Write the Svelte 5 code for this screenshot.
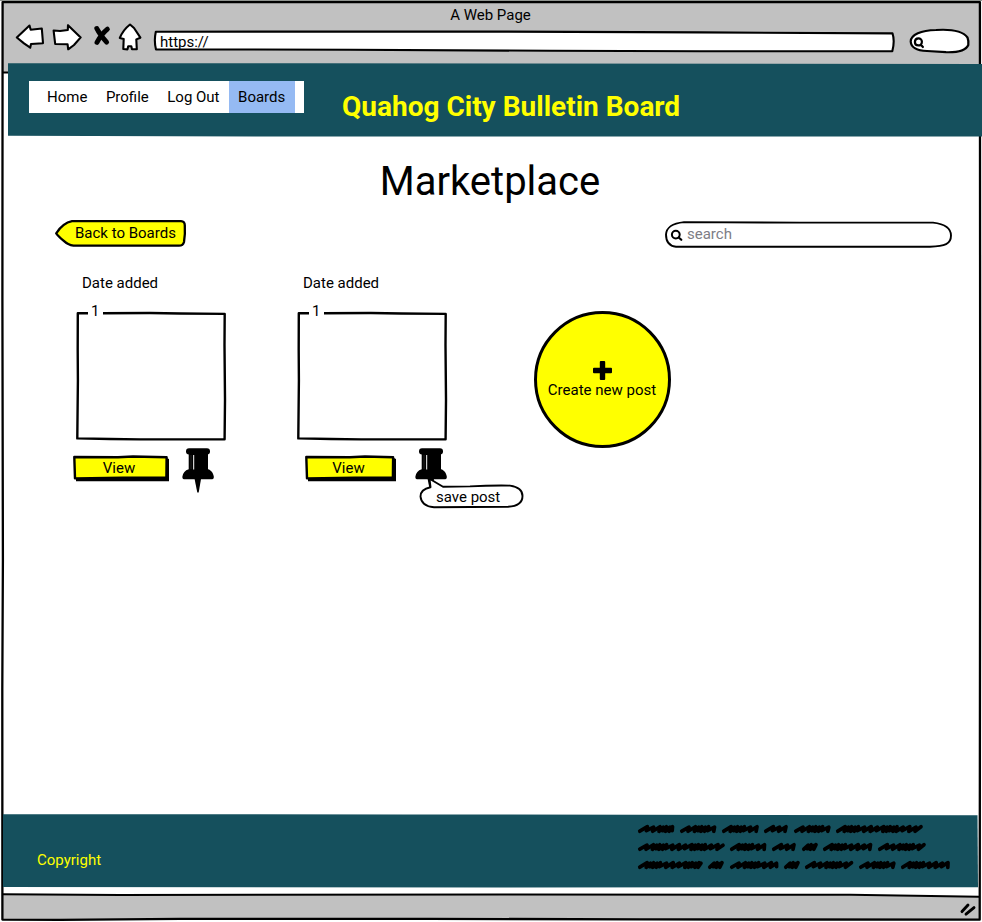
<script>
  const nav = ['Home', 'Profile', 'Log Out', 'Boards'];
  const active = 'Boards';

  const blurb = [
    [36.5, 36.5, 37, 24, 37, 87],
    [87, 36.5, 24, 16, 49.5, 48],
    [65, 16, 48.5, 16, 48.5, 37, 49]
  ];

  // Zigzag handwriting: long upstrokes with short returns
  function scribble(width, seed) {
    const steps = [7.6, 7.2, 7.4, 4.4, 4, 4.6, 4.2, 7.2];
    let x = 1.8;
    let i = width < 20 ? 3 : seed % 3;
    let d = `M${x} 7.2`;
    while (x < width - 4) {
      const s = steps[i % steps.length];
      const top = Math.min(x + s, width - 2);
      d += `L${top.toFixed(1)} ${i % 2 ? 3.2 : 2.7}`;
      x = x + s - 1;
      if (x < width - 1.8) d += `L${x.toFixed(1)} ${i % 3 ? 7.3 : 6.7}`;
      i += 1;
    }
    return d;
  }
</script>

{#snippet pin()}
  <svg class="pin" width="32" height="46" viewBox="182 448 32 46">
    <rect x="186" y="448.2" width="24" height="6.4" rx="3" />
    <path d="M188.7 453H208V469.3C211 470 213.2 473 213.8 476.5Q214 479.3 212.2 479.3H184Q182.2 479.3 182.4 476.5C183 473 185 470.3 188.7 469.3Z" />
    <path d="M194.6 479H201L198.7 492.5H197.3Z" />
    <path d="M193.7 455V469.5" stroke="#fff" stroke-width="1" />
    <path d="M191 455V469" stroke="#555" stroke-width=".4" />
  </svg>
{/snippet}

{#snippet box()}
  <div class="box">
    <svg width="153" height="130" viewBox="73 311 153 130" fill="none" stroke="#000" stroke-width="2.4" stroke-linejoin="round">
      <path d="M88 313.2H77.8L77.7 350L77.9 380L77.3 438.4L110 439L140 439.4L224.6 439.3L225 400L224.5 345L224.7 313.9L180 313.5L150 313L103 313.2" />
    </svg>
    <span>1</span>
  </div>
{/snippet}

<div class="window">
  <svg class="frame" width="982" height="922" viewBox="0 0 982 922" aria-hidden="true">
    <path d="M0 0H982V1H0Z" fill="#8f938f" />
    <path d="M3 2H980V72.5H3Z" fill="#c1c1c1" />
    <path d="M3 894.6L200 895L800 894.7L980 897V920L500 919L3 919.5Z" fill="#c1c1c1" />
    <g fill="none" stroke="#000" stroke-width="2.3">
      <path d="M2.6 2.1H979.9L980.2 460L979.7 919.7L640 919.4L430 918.8L180 918.9L60 919.9L2.4 919.6L2.3 690L2.9 560L2.4 300Z" stroke-linejoin="round" />
      <path d="M3 72.4H9M3 894.3L120 895.1L500 894.4L850 894.8L979 896.8" stroke-width="2" />
      <path d="M962 911.6L968 905M966 914.2L974 907.6" stroke-width="2.9" stroke-linecap="round" />
    </g>
  </svg>

  <div class="chrome">
    <div class="page-title">A Web Page</div>
    <div class="tools">
      <svg width="30" height="30" viewBox="15 22 30 30" class="tool"><path d="M16.8 37.5L29.5 25.5L30.7 29.7L41.8 28.5L43 43.2L31 44L30.2 47.7L24 43.4Z" /></svg>
      <svg width="30" height="30" viewBox="52 22 30 30" class="tool"><path d="M80.7 37.4L68 25.2L67.8 30L60 31L53.6 30.5L55.2 44L67.6 44.3L68.2 49.3L74 45Z" /></svg>
      <svg width="19" height="30" viewBox="92 22 19 30" class="cross"><path d="M96.8 28.5Q100 35 106.6 42.2M107.4 29.2Q101.5 34 97 42.4" /></svg>
      <svg width="24" height="30" viewBox="118 22 24 30" class="tool home"><path d="M130 24.5L134 28L140.4 37.7L136.3 39.4L136.8 49.3L132 49.3L131.3 46.2H128.2L127.5 49.4L123.3 49L123.7 39L119.8 38Q123 30 130 24.5Z" /></svg>
      <div class="url">
        <svg width="742" height="30" viewBox="153 26 742 30"><path d="M155.8 31.7L500 31.6L700 32.4L892.5 33.4Q895 41 892.3 51.3L700 51.2L550 50.8L350 49.7L156 49.4Q153.8 41 155.8 31.7Z" /></svg>
        <span>https://</span>
      </div>
      <svg width="61" height="30" viewBox="909 26 61 30" class="find">
        <path fill="#fff" d="M936 30C951 29 963 31.5 967.5 37.5Q968.8 41 968.3 45C966 50.5 957 52.5 946 52.2L927 51C917 50.6 911 47 910.7 41.5C911 34.5 921 30.5 936 30Z" />
        <path d="M921.9 41.8C921.9 46.8 914.9 46.5 914.9 42C915 37.3 921.9 37.2 921.9 41.8ZM920.7 44.5L922.9 47" />
      </svg>
    </div>
  </div>

  <header>
    <svg class="fill" width="974" height="74" viewBox="0 0 974 74" aria-hidden="true"><path d="M0 .2L300 .2L974 1.1V73.4L600 73.4L250 73.4L0 72.8Z" /></svg>
    <nav>
      {#each nav as item}
        <a class:active={item === active} href="#top">{item}</a>
      {/each}
    </nav>
    <h1>Quahog City Bulletin Board</h1>
  </header>

  <main>
    <h2>Marketplace</h2>
    <div class="row">
      <button class="back">
        <svg width="132" height="28" viewBox="54 219 132 28"><path d="M72 221.2H181Q184.8 221.4 184.8 225.5Q185.3 234 184 242Q183 245.7 179 245.7H73.5Q68 245 63.5 240.7Q58 236 56.2 233.3Q63 223 72 221.2Z" /></svg>
        <span>Back to Boards</span>
      </button>
      <div class="search">
        <svg width="288" height="28" viewBox="664 221 288 28">
          <path d="M684 222.1L800 222.6L933 222.6C945 224 951 229 951 235.5C951 244 945 246.5 930 246.7H676C669 246 666 242 666 234.5C666.5 227 672 223.5 684 222.1Z" stroke-width="1.9" />
          <circle cx="675.8" cy="234.6" r="3.9" stroke-width="2" /><path d="M678.7 237.5L681.3 239.8" stroke-width="2.2" />
        </svg>
        <span>search</span>
      </div>
    </div>

    <div class="posts">
      <article>
        <div class="date">Date added</div>
        {@render box()}
        <div class="actions">
          <button class="view">
            <svg width="97" height="28" viewBox="0 0 97 28"><path d="M3 3L92 2.5L96 4V26.3H3Z" /><path class="face" d="M1.3 2L45 2.2L60 1.5L93.6 2.3L93.4 22.6L50 22.8L2 23.4Z" /></svg>
            <span>View</span>
          </button>
          {@render pin()}
        </div>
      </article>
      <article>
        <div class="date">Date added</div>
        {@render box()}
        <div class="actions second">
          <button class="view narrow">
            <svg width="92" height="28" viewBox="0 0 92 28"><path d="M3 3L88 2.5L91 4V26.3H3Z" /><path class="face" d="M1.3 2L45 2.2L60 1.5L88.1 2.3L87.9 22.6L50 22.8L2 23.4Z" /></svg>
            <span>View</span>
          </button>
          <div class="pinned">
            {@render pin()}
            <div class="tip">
              <svg width="106" height="32" viewBox="418 477 106 32"><path d="M429.5 478.8L443 486.8L470 486.4Q490 485.3 510 485.6C519 486.8 522.5 491 522.5 496C522.5 502.5 518 506.2 508 506.7L434 507.3C425 506.5 421 502 420.5 496.5C420.5 491.5 424 488.5 430.5 487.2Z" /></svg>
              <span>save post</span>
            </div>
          </div>
        </div>
      </article>
      <button class="create">
        <svg width="19" height="19" viewBox="0 0 19 19"><path d="M6.8 1Q6.8 0 7.8 0H11.2Q12.2 0 12.2 1V6.8H18Q19 6.8 19 7.8V11.2Q19 12.2 18 12.2H12.2V18Q12.2 19 11.2 19H7.8Q6.8 19 6.8 18V12.2H1Q0 12.2 0 11.2V7.8Q0 6.8 1 6.8H6.8Z" /></svg>
        <span>Create new post</span>
      </button>
    </div>
  </main>

  <footer>
    <svg class="fill" width="976" height="74" viewBox="0 0 976 74" aria-hidden="true"><path d="M0 .2L400 .4L974.5 1.2L975 73.2L500 73.5L0 73.1Z" /></svg>
    <div class="copy">Copyright</div>
    <div class="blurb">
      {#each blurb as line, r}
        <div class="line">
          {#each line as w, i}
            <svg width={w} height="10" viewBox="0 0 {w} 10"><path d={scribble(w, r + i)} /></svg>
          {/each}
        </div>
      {/each}
    </div>
  </footer>
</div>

<style>
  :global(body) { background: #fff; }
  .window {
    position: relative;
    box-sizing: border-box;
    width: 982px;
    height: 922px;
    padding-bottom: 34px;
    display: flex;
    flex-direction: column;
    overflow: hidden;
    font: 15px/18px Roboto, sans-serif;
    color: #000;
  }
  svg { display: block; flex: none; overflow: visible; }
  .frame { position: absolute; inset: 0; }
  .chrome, header, main, footer { position: relative; }
  .fill { position: absolute; top: 0; left: 0; fill: #15505d; }

  .chrome { height: 63px; flex: none; box-sizing: border-box; padding: 6px 12px 0 15px; }
  .page-title { text-align: center; margin-right: 4px; }
  .tools { display: flex; margin-top: -2px; }
  .tools > svg + svg { margin-left: 7px; }
  .tool path { fill: #fff; stroke: #000; stroke-width: 2.1; stroke-linejoin: round; }
  .tools > .cross { margin-left: 10px; }
  .cross path { fill: none; stroke: #000; stroke-width: 4.9; stroke-linecap: round; }
  .url { position: relative; width: 742px; margin: 4px 14px 0 11px; }
  .url path { fill: #fff; stroke: #000; stroke-width: 2.1; stroke-linejoin: round; }
  .url span { position: absolute; left: 7px; top: 7px; }
  .find { margin-top: 4px; fill: none; stroke: #000; stroke-width: 2.2; stroke-linecap: round; }

  header { height: 73px; flex: none; margin-left: 8px; display: flex; align-items: flex-start; }
  nav { position: relative; display: flex; box-sizing: border-box; width: 275px; height: 32px; margin: 18px 38px 0 21px; padding-left: 9px; background: #fff; }
  nav a { padding: 0 9.5px 0 9px; line-height: 32px; color: #000; text-decoration: none; }
  nav a.active { background: #95baf3; }
  h1 { position: relative; margin: 27px 0 0; font-size: 28px; line-height: 34px; font-weight: 700; color: #ff0; white-space: nowrap; }

  main { flex: 1; }
  h2 { margin: 21px 2px 0 0; text-align: center; font-size: 40px; line-height: 50px; font-weight: 400; }
  button { border: 0; padding: 0; background: none; font: inherit; color: inherit; }
  .row { display: flex; justify-content: space-between; align-items: flex-start; padding: 12px 30px 0 54px; }
  .back, .search, .view, .box { position: relative; display: block; }
  .back path { fill: #ff0; stroke: #000; stroke-width: 2.3; stroke-linejoin: round; }
  .back span { position: absolute; left: 21px; top: 5px; white-space: nowrap; }
  .search { margin-top: 2px; }
  .search svg { fill: none; stroke: #000; stroke-linecap: round; }
  .search span { position: absolute; left: 23px; top: 4px; color: #7d7d85; }

  .posts { display: flex; align-items: flex-start; padding: 25px 0 0 73px; }
  article { width: 153px; margin-right: 68px; }
  .date { padding-left: 9px; }
  .box { margin-top: 19px; }
  .box span { position: absolute; left: 18px; top: -9px; }
  .actions { display: flex; align-items: flex-start; margin-top: 7px; }
  .actions .pin { margin-left: 12px; }
  .view { margin-top: 7px; }
  .view .face { fill: #ff0; stroke: #000; stroke-width: 2.4; stroke-linejoin: round; }
  .view span { position: absolute; left: 0; width: 92px; top: 4px; text-align: center; }
  .view.narrow span { width: 87px; }
  .second { padding-left: 11px; }
  .pinned { position: relative; margin-left: 6px; }
  .tip { position: absolute; left: 15px; top: 29px; }
  .tip path { fill: #fff; stroke: #000; stroke-width: 1.9; stroke-linejoin: round; }
  .tip span { position: absolute; left: 18px; top: 11px; white-space: nowrap; }
  .create { box-sizing: border-box; width: 137px; height: 137px; margin: 37px 0 0 19px; border: 3px solid #000; border-radius: 50%; background: #ff0; display: flex; flex-direction: column; align-items: center; padding-top: 47px; white-space: nowrap; }
  .create span { margin: 1px 1px 0 0; }

  footer { height: 74px; flex: none; margin-left: 3px; display: flex; justify-content: space-between; align-items: flex-start; }
  .copy { position: relative; margin: 37px 0 0 34px; color: #ff0; }
  .blurb { position: relative; width: 344px; padding-top: 10px; display: flex; flex-direction: column; gap: 8.2px; }
  .line { display: flex; gap: 5.4px; }
  .line path { fill: none; stroke: #000; stroke-width: 3.7; stroke-linecap: round; stroke-linejoin: round; }
</style>
